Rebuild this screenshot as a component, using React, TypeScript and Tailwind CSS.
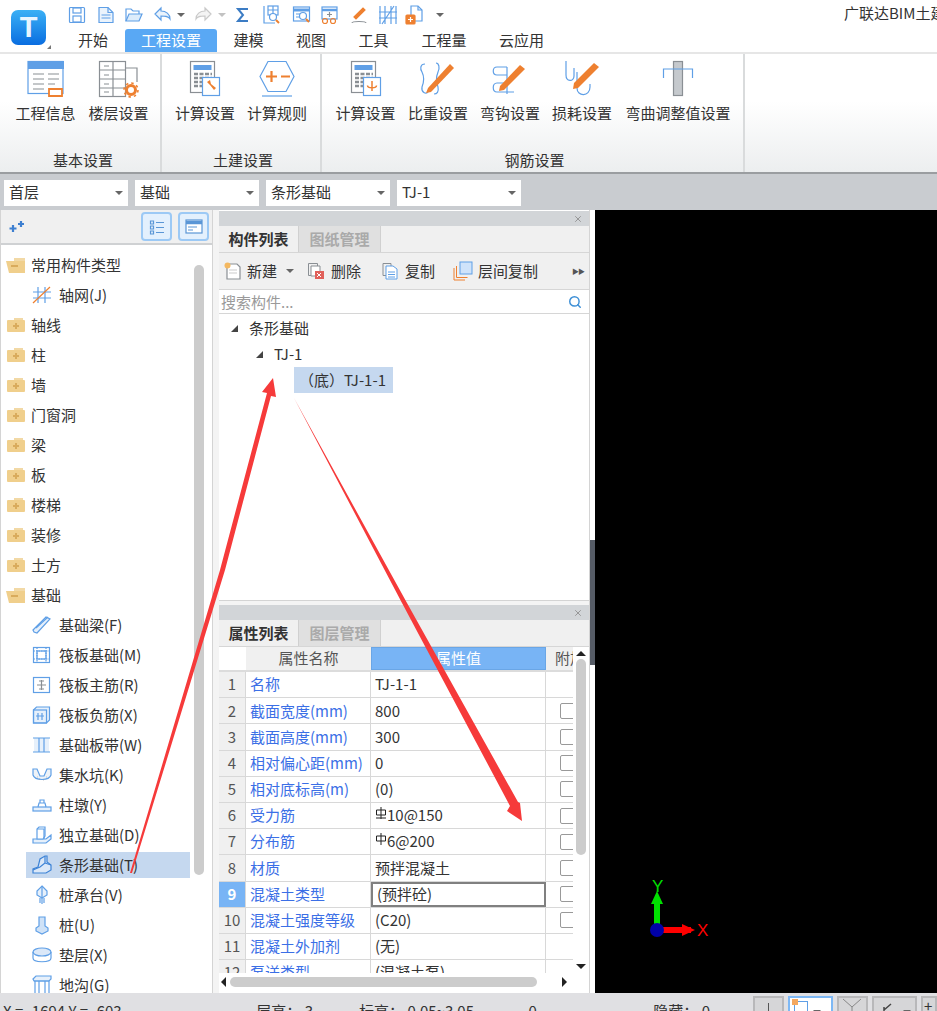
import { Search, X } from "lucide-react";
import type { ReactNode } from "react";

const blue = "#5f9fe6";
const orange = "#ee8030";
const grey = "#8a8f94";

function Ico({ s = 20, w, h, children }: { s?: number; w?: number; h?: number; children: ReactNode }) {
  return (
    <svg width={w ?? s} height={h ?? s} viewBox={`0 0 ${w ?? s} ${h ?? s}`} fill="none" stroke={blue} strokeWidth="1.2" className="shrink-0">
      {children}
    </svg>
  );
}

function Caret({ className = "" }: { className?: string }) {
  return <span className={`inline-block w-0 h-0 border-x-[4px] border-x-transparent border-t-[4px] border-t-[#666] ${className}`} />;
}

const quickIcons: { ml: string; icon: ReactNode }[] = [
  { ml: "", icon: <Ico s={18}><rect x="1.500" y="1.500" width="15" height="15" rx="1" /><rect x="5" y="2" width="8" height="5" /><rect x="5" y="10" width="8" height="6" /></Ico> },
  { ml: "ml-[11px]", icon: <Ico s={18}><path d="M2 1.500h9l5 5v10H2z" fill="#eaf3fc" /><path d="M11 1.500v5h5M4.500 9h9M4.500 12h9" /></Ico> },
  { ml: "ml-[9px]", icon: <Ico><path d="M2 16V4h5l2 2h6v3" /><path d="M2 16l3-7h13l-3 7z" fill="#dcecfb" /></Ico> },
  { ml: "ml-[9px]", icon: <Ico><path d="M8 3L2 9l6 6v-4c4 0 7 0 9 3 0-5-4-8-9-8z" fill="#eaf3fc" /></Ico> },
  { ml: "ml-[4px]", icon: <Caret /> },
  { ml: "ml-[8px]", icon: <Ico><path d="M12 3l6 6-6 6v-4c-4 0-7 0-9 3 0-5 4-8 9-8z" fill="#f4f4f4" stroke="#c9c9c9" /></Ico> },
  { ml: "ml-[5px]", icon: <Caret className="opacity-40" /> },
  { ml: "ml-[8px]", icon: <Ico s={18}><path d="M14 3H4l5 6-5 6h10" stroke="#3c7cc4" strokeWidth="2" /></Ico> },
  { ml: "ml-[10px]", icon: <Ico><path d="M2 1v17h11" /><rect x="6" y="1" width="10" height="9" /><path d="M6 5h10M11 1v9" /><circle cx="11" cy="12" r="3.500" fill="#fff" /><path d="M14 15l3 3" stroke={orange} strokeWidth="2" /></Ico> },
  { ml: "ml-[10px]", icon: <Ico><rect x="1.500" y="2" width="16" height="14" /><path d="M1.500 5h16" strokeWidth="3" /><path d="M4 9h4M4 12h4" /><circle cx="11" cy="11" r="3.500" fill="#fff" /><path d="M14 14l3 3" stroke={orange} strokeWidth="2" /></Ico> },
  { ml: "ml-[8px]", icon: <Ico><rect x="2" y="2" width="15" height="12" /><path d="M2 5h15" strokeWidth="2.500" /><path d="M9.500 7v5M7 9.500h5" stroke={grey} /><circle cx="5" cy="16" r="2.500" stroke={orange} /><circle cx="13" cy="16" r="2.500" stroke={orange} /></Ico> },
  { ml: "ml-[10px]", icon: <Ico><path d="M4 12L13 3l2 2-9 9z" fill={orange} stroke={orange} /><path d="M2 18c0-2 14-2 14 0" stroke={grey} /></Ico> },
  { ml: "ml-[8px]", icon: <Ico><path d="M2 1v18M7 1v18M13 1v18M18 1v18M1 7h18M1 13h18M4 19L16 1" /></Ico> },
  { ml: "ml-[7px]", icon: <Ico><path d="M6 1h7l4 4v11H6z" fill="#fff" /><path d="M13 1v4h4" /><rect x="1" y="10" width="9" height="9" rx="1" fill={orange} stroke={orange} /><path d="M5.500 12v5M3 14.500h5" stroke="#fff" /></Ico> },
  { ml: "ml-[11px]", icon: <Caret /> },
];

const ribbonIcons: Record<string, ReactNode> = {
  info: (
    <Ico w={40} h={40}>
      <rect x="2" y="1.500" width="35" height="32" fill="#fff" />
      <rect x="2" y="1" width="36" height="8" fill={blue} stroke="none" />
      <path d="M7 14h11M22 14h11M7 19h11M22 19h11M7 24h11M22 24h7M7 29h11" stroke={grey} />
      <path d="M23 29h13v7H23z" fill="#fff" stroke={orange} strokeWidth="1.800" />
    </Ico>
  ),
  floor: (
    <Ico w={42} h={40}>
      <rect x="1.500" y="1.500" width="26" height="35" stroke={grey} fill="#fff" />
      <path d="M15 1.500v35M1.500 10h26M1.500 19h26M1.500 28h26M27 8h12v14M6 6h5M6 15h5M6 24h5M6 32h5" stroke={grey} />
      <circle cx="33" cy="30" r="4.500" stroke={orange} strokeWidth="3" fill="#fff" />
      <circle cx="33" cy="30" r="7" stroke={orange} strokeWidth="1.500" strokeDasharray="2.500 3" />
    </Ico>
  ),
  calc: (
    <Ico w={32} h={38}>
      <rect x="1.500" y="1.500" width="24" height="31" stroke={grey} fill="#fff" />
      <rect x="4.500" y="5" width="18" height="5" fill={blue} stroke="none" />
      <path d="M5 14h18M5 18h18M5 22h8M5 26h8" stroke={grey} strokeWidth="2.500" strokeDasharray="4 1.500" />
      <rect x="13.500" y="17.500" width="17" height="18" fill="#fff" />
      <path d="M18 22l3 3 4 5 2-2-5-4-1-4z" fill={orange} stroke="none" />
    </Ico>
  ),
  rule: (
    <Ico w={38} h={38}>
      <path d="M10 1.500h18l8 15-8 15H10L2 16.500z" fill="#fff" />
      <path d="M8 16.500h11M13.500 11v11M23 16.500h9" stroke={orange} strokeWidth="2.200" />
      <path d="M4 36h30" />
    </Ico>
  ),
  calc2: (
    <Ico w={32} h={38}>
      <rect x="1.500" y="1.500" width="24" height="31" stroke={grey} fill="#fff" />
      <rect x="4.500" y="5" width="18" height="5" fill={blue} stroke="none" />
      <path d="M5 14h18M5 18h18M5 22h8M5 26h8" stroke={grey} strokeWidth="2.500" strokeDasharray="4 1.500" />
      <rect x="13.500" y="17.500" width="17" height="18" fill="#fff" />
      <path d="M22 21v10M17.500 25.500c0 3 9 3 9 0" stroke={orange} strokeWidth="1.500" />
    </Ico>
  ),
  density: (
    <Ico w={38} h={38}>
      <path d="M6 4c-5 0-5 5-3 8 2 4 2 10 0 15-1 5 4 8 6 5M17 3c3 0 4 5 2 9-2 5-2 10 0 15 1 5-1 7-4 7" />
      <path d="M9 28L31 4l4 4-23 24-5 1z" fill={orange} stroke="none" />
    </Ico>
  ),
  hook: (
    <Ico w={38} h={38}>
      <path d="M16 7H6c-5 0-5 8 0 8h10M16 7v27M16 23H6c-5 0-5 9 0 9h17" />
      <path d="M9 26L29 5l5 4-21 21-5 1z" fill={orange} stroke="none" />
    </Ico>
  ),
  loss: (
    <Ico w={38} h={38}>
      <path d="M3 1v14c0 7 8 7 8 1V8M14 12v16c0 9 13 9 13-1v-3" />
      <path d="M11 23L31 3l5 4-21 21-5 1z" fill={orange} stroke="none" />
    </Ico>
  ),
  bend: (
    <Ico w={32} h={38}>
      <rect x="11.500" y="1.500" width="9" height="34" fill="#c5c9cd" stroke={grey} />
      <path d="M1.500 18V9h29v9" />
    </Ico>
  ),
};

const ribbonGroups = [
  { title: "基本设置", pad: "w-[162px] pl-[9px]", items: [{ label: "工程信息", icon: "info", w: "w-[73px]" }, { label: "楼层设置", icon: "floor", w: "w-[73px]" }] },
  { title: "土建设置", pad: "w-[160px] pl-[7px]", items: [{ label: "计算设置", icon: "calc", w: "w-[72px]" }, { label: "计算规则", icon: "rule", w: "w-[72px]" }] },
  {
    title: "钢筋设置",
    pad: "w-[423px] pl-[7px]",
    items: [
      { label: "计算设置", icon: "calc2", w: "w-[73px]" },
      { label: "比重设置", icon: "density", w: "w-[72px]" },
      { label: "弯钩设置", icon: "hook", w: "w-[72px]" },
      { label: "损耗设置", icon: "loss", w: "w-[72px]" },
      { label: "弯曲调整值设置", icon: "bend", w: "w-[120px]" },
    ],
  },
];

function FolderClosed() {
  return (
    <svg width="20" height="20" viewBox="0 0 20 20" className="shrink-0">
      <path d="M8 3h9v2H8z" fill="#f2d9a6" />
      <rect x="1" y="5" width="18" height="12" rx="1" fill="#f0cf8c" />
      <path d="M10 8v6M7 11h6" stroke="#d9ab5c" strokeWidth="2" />
    </svg>
  );
}

function FolderOpen() {
  return (
    <svg width="20" height="20" viewBox="0 0 20 20" className="shrink-0">
      <path d="M8 3h11v4H8z" fill="#f2d9a6" />
      <path d="M0 6h19v12H3z" fill="#f0cf8c" />
      <path d="M5 11h7" stroke="#d9ab5c" strokeWidth="2" />
    </svg>
  );
}

const leafIcons: Record<string, ReactNode> = {
  grid: <Ico><path d="M6 2v16M13 2v16M1 7h18M1 13h18" /><path d="M1 18L18 2" stroke={orange} /></Ico>,
  beam: <Ico><path d="M1 15L14 2l4 2L5 18l-3-1z" fill="#e6f0fb" /><path d="M4 13l12-11" /></Ico>,
  raft: <Ico><rect x="1.500" y="2.500" width="16" height="15" /><rect x="5" y="6" width="9" height="8" /><path d="M1.500 6h16M1.500 14h16M5 2.500v15M14 2.500v15" strokeDasharray="1.500 1" /></Ico>,
  main: <Ico><rect x="1.500" y="2.500" width="16" height="15" /><path d="M9.500 5v10M5 10h9M7 6h5M7 14h5" stroke={grey} /></Ico>,
  neg: <Ico><path d="M1.500 5l3-3h13v13l-3 3h-13z" fill="#e6f0fb" /><rect x="1.500" y="5" width="13" height="13" /><path d="M6 8v7M10 8v7M4 11h8" /></Ico>,
  strip: <Ico><rect x="2" y="3" width="15" height="14" fill="#e6f0fb" stroke="none" /><path d="M1 3h17M1 17h17M7 3v14M12 3v14" /></Ico>,
  pit: <Ico><path d="M1 4h4l3 7h4l3-7h4v6c-2 6-16 6-18 0z" fill="#eef3f8" /><path d="M7 14h.5M11 15h.5M14 12h.5M5 12h.5" stroke={grey} /></Ico>,
  pier: <Ico><rect x="1" y="12" width="18" height="4" fill="#e6f0fb" /><path d="M6 12l1-4h6l1 4M8 8V5h4v3" /></Ico>,
  single: <Ico><path d="M1 14h13l5-4v4l-5 4H1z" fill="#e6f0fb" /><path d="M5 14V4l2-2h6v9l-2 3z" fill="#fff" /><path d="M5 4h7v10" /></Ico>,
  stripBase: <Ico><path d="M1 18v-4l5-2 2-8 5-3 2 0v6l4 3v5l-5 3z" fill="#dbe8f8" stroke="#3d83d6" /><path d="M13 1v7l-5 4-7 3M13 8l6 2" stroke="#3d83d6" /></Ico>,
  cap: <Ico><path d="M10 1l5 5v4l-5 3-5-3V6z" fill="#e6f0fb" /><path d="M10 1v12M8 13v5M12 13v5M10 13v6" /></Ico>,
  pile: <Ico><path d="M7 2h6v9l3 2v3l-6 3-6-3v-3l3-2z" fill="#cfe2f7" /></Ico>,
  pad: <Ico><ellipse cx="10" cy="7" rx="9" ry="4" fill="#dbe8f8" /><path d="M1 7v6c0 5 18 5 18 0V7" /></Ico>,
  ditch: <Ico><path d="M1 4L4 1h15v3L17 6H2z" fill="#e6f0fb" /><path d="M2 6h15M3 6v13M7 6v13M13 6v13M17 6v13" /></Ico>,
};

const tree: { label: string; icon?: string; open?: boolean; leaf?: boolean; selected?: boolean }[] = [
  { label: "常用构件类型", open: true },
  { label: "轴网(J)", leaf: true, icon: "grid" },
  { label: "轴线" },
  { label: "柱" },
  { label: "墙" },
  { label: "门窗洞" },
  { label: "梁" },
  { label: "板" },
  { label: "楼梯" },
  { label: "装修" },
  { label: "土方" },
  { label: "基础", open: true },
  { label: "基础梁(F)", leaf: true, icon: "beam" },
  { label: "筏板基础(M)", leaf: true, icon: "raft" },
  { label: "筏板主筋(R)", leaf: true, icon: "main" },
  { label: "筏板负筋(X)", leaf: true, icon: "neg" },
  { label: "基础板带(W)", leaf: true, icon: "strip" },
  { label: "集水坑(K)", leaf: true, icon: "pit" },
  { label: "柱墩(Y)", leaf: true, icon: "pier" },
  { label: "独立基础(D)", leaf: true, icon: "single" },
  { label: "条形基础(T)", leaf: true, icon: "stripBase", selected: true },
  { label: "桩承台(V)", leaf: true, icon: "cap" },
  { label: "桩(U)", leaf: true, icon: "pile" },
  { label: "垫层(X)", leaf: true, icon: "pad" },
  { label: "地沟(G)", leaf: true, icon: "ditch" },
];

function RebarMark({ bars }: { bars?: boolean }) {
  return (
    <svg width="12" height="12" viewBox="0 0 12 12" fill="none" stroke="#222" strokeWidth="1" className="mb-[5px] shrink-0">
      {bars && <path d="M1 11h10" />}
      <path d="M1.500 3h9v5h-9zM6 0v12" />
    </svg>
  );
}

const rows: { n: number; name: string; value: ReactNode; check: boolean }[] = [
  { n: 1, name: "名称", value: "TJ-1-1", check: false },
  { n: 2, name: "截面宽度(mm)", value: "800", check: true },
  { n: 3, name: "截面高度(mm)", value: "300", check: true },
  { n: 4, name: "相对偏心距(mm)", value: "0", check: true },
  { n: 5, name: "相对底标高(m)", value: "(0)", check: true },
  { n: 6, name: "受力筋", value: <span className="flex items-center"><RebarMark bars />10@150</span>, check: true },
  { n: 7, name: "分布筋", value: <span className="flex items-center"><RebarMark />6@200</span>, check: true },
  { n: 8, name: "材质", value: "预拌混凝土", check: true },
  { n: 9, name: "混凝土类型", value: "(预拌砼)", check: true },
  { n: 10, name: "混凝土强度等级", value: "(C20)", check: true },
  { n: 11, name: "混凝土外加剂", value: "(无)", check: false },
  { n: 12, name: "泵送类型", value: "(混凝土泵)", check: false },
];

function PanelHead({ active, other }: { active: string; other: string }) {
  return (
    <>
      <div className="h-[15px] bg-[#d2d5d8] flex items-center justify-end pr-[6px]">
        <X size={10} strokeWidth={2} className="text-[#8a8a8a]" />
      </div>
      <div className="h-[27px] bg-[#f0f0f0] flex border-b border-[#d6d6d6]">
        <div className="w-[80px] flex items-center justify-center font-bold text-[#333] border-r border-[#d0d0d0]">{active}</div>
        <div className="w-[82px] flex items-center justify-center font-bold text-[#aaa] bg-[#e0e0e0] border-r border-[#d0d0d0]">{other}</div>
      </div>
    </>
  );
}

export default function App() {
  return (
    <div className="relative w-[937px] h-[1011px] overflow-hidden bg-white text-[#333] text-[15px] font-['Noto_Sans_CJK_SC','Noto_Sans',sans-serif]">
      {/* title + tabs */}
      <div className="h-[52px] flex bg-white">
        <div className="w-[57px] shrink-0 pl-[11px] pt-[10px] relative">
          <div className="w-[35px] h-[35px] rounded-[7px] bg-gradient-to-b from-[#3bb0f5] to-[#0a6de0] flex items-center justify-center text-[#e8f5ff] text-[29px] font-bold leading-none font-['Liberation_Sans',sans-serif]">T</div>
          <span className="absolute left-[47px] top-[45px] w-0 h-0 border-l-[4px] border-l-transparent border-b-[4px] border-b-[#777]" />
        </div>
        <div className="flex-1 min-w-0 flex flex-col">
          <div className="h-[29px] flex items-center pl-[11px] relative">
            {quickIcons.map((q, i) => (
              <div key={i} className={`${q.ml} flex items-center shrink-0`}>{q.icon}</div>
            ))}
            <div className="absolute left-[787px] top-[2px] whitespace-nowrap">广联达BIM土建计量平台</div>
          </div>
          <div className="h-[23px] flex text-center leading-[22px]">
            <div className="w-[68px] pl-[4px]">开始</div>
            <div className="w-[92px] bg-[#59a8f4] text-white rounded-t-[3px]">工程设置</div>
            <div className="w-[63px]">建模</div>
            <div className="w-[62px]">视图</div>
            <div className="w-[63px]">工具</div>
            <div className="w-[78px]">工程量</div>
            <div className="w-[77px]">云应用</div>
          </div>
        </div>
      </div>

      {/* ribbon */}
      <div className="h-[122px] flex border-t-2 border-[#e6e6e6] bg-gradient-to-b from-white from-40% to-[#eceeef] border-b-2 border-b-[#9a9da0]">
        {ribbonGroups.map((g) => (
          <div key={g.title} className={`${g.pad} flex flex-col border-r-2 border-[#d9dbdc]`}>
            <div className="flex">
              {g.items.map((it) => (
                <div key={it.label + it.icon} className={`${it.w} flex flex-col items-center`}>
                  <div className="h-[49px] pt-[6px] flex items-start justify-center">{ribbonIcons[it.icon]}</div>
                  <div className="leading-5 whitespace-nowrap">{it.label}</div>
                </div>
              ))}
            </div>
            <div className="mt-[27px] text-center leading-5 pr-[3px]">{g.title}</div>
          </div>
        ))}
      </div>

      {/* selectors */}
      <div className="h-[36px] bg-[#c9ccd0] flex items-center gap-[7px] pl-[4px] pt-[1px]">
        {["首层", "基础", "条形基础", "TJ-1"].map((v) => (
          <div key={v} className="w-[124px] h-[26px] bg-white flex items-center justify-between px-[5px]">
            <span>{v}</span>
            <Caret />
          </div>
        ))}
      </div>

      {/* main */}
      <div className="h-[783px] flex bg-[#f4f4f4]">
        {/* left tree */}
        <div className="w-[213px] shrink-0 flex flex-col bg-white border-x border-[#d4d4d4]">
          <div className="h-[35px] shrink-0 bg-[#f0f0f0] border-b-2 border-[#cfd1d3] flex items-center pl-[7px] pr-[3px]">
            <svg width="18" height="14" viewBox="0 0 18 14" className="shrink-0">
              <path d="M5 5v7M1.500 8.500h7M13 1v6M10 4h6" stroke="#3d7fd0" strokeWidth="2.200" />
            </svg>
            <div className="ml-auto flex gap-[6px]">
              <div className="w-[31px] h-[29px] rounded-[4px] border-2 border-[#9cc9f5] bg-[#e3f0fd] flex items-center justify-center">
                <Ico s={16}><path d="M1.500 2h3v3h-3zM1.500 7h3v3h-3zM1.500 12h3v3h-3zM7 3.500h8M7 8.500h8M7 13.500h8" stroke="#5a96d6" /></Ico>
              </div>
              <div className="w-[31px] h-[29px] rounded-[4px] border-2 border-[#9cc9f5] bg-[#e3f0fd] flex items-center justify-center">
                <Ico s={18}><rect x="1" y="2" width="16" height="13" fill="#fff" stroke="#5a96d6" /><path d="M1 4.500h16" stroke="#5a96d6" strokeWidth="3.500" /><path d="M3 9h9M3 12h5" stroke="#5a96d6" /></Ico>
              </div>
            </div>
          </div>
          <div className="flex flex-1 min-h-0 overflow-hidden">
            <div className="w-[193px] shrink-0 pt-[5px]">
              {tree.map((t) =>
                t.leaf ? (
                  <div key={t.label} className="h-[30px] flex items-center pl-[25px]">
                    <div className={`w-[164px] h-[26px] flex items-center pl-[6px] gap-[7px] whitespace-nowrap ${t.selected ? "bg-[#c5d8ef]" : ""}`}>
                      {leafIcons[t.icon as string]}
                      <span>{t.label}</span>
                    </div>
                  </div>
                ) : (
                  <div key={t.label} className="h-[30px] flex items-center pl-[5px] gap-[5px]">
                    {t.open ? <FolderOpen /> : <FolderClosed />}
                    <span>{t.label}</span>
                  </div>
                )
              )}
            </div>
            <div className="pt-[20px]">
              <div className="w-[10px] h-[610px] rounded-full bg-[#cccccc]" />
            </div>
          </div>
        </div>

        {/* centre panels */}
        <div className="w-[371px] shrink-0 ml-[6px] flex flex-col bg-white border-r border-[#d4d4d4]">
          <div className="h-[390px] shrink-0 flex flex-col pt-[1px]">
            <PanelHead active="构件列表" other="图纸管理" />
            <div className="h-[37px] bg-[#f0f0f0] flex items-center pl-[5px] border-b border-[#d6d6d6] whitespace-nowrap">
              <Ico s={18}><path d="M3 2h10l3 3v12H3z" fill="#fff" stroke={grey} /><path d="M5 8h8M5 11h8" stroke="#ccc" /><circle cx="3.500" cy="3.500" r="3" fill="#f4b860" stroke="none" /></Ico>
              <span className="ml-[5px]">新建</span>
              <Caret className="ml-[9px]" />
              <svg width="18" height="18" viewBox="0 0 18 18" fill="none" className="ml-[13px] shrink-0">
                <path d="M1.500 1.500h9v12h-9z" stroke={grey} /><path d="M4 4h9v10H4z" fill="#fff" stroke={grey} />
                <rect x="8" y="9" width="9" height="8" fill="#e0605a" /><path d="M10 11l4 4M14 11l-4 4" stroke="#fff" />
              </svg>
              <span className="ml-[6px]">删除</span>
              <svg width="17" height="18" viewBox="0 0 17 18" fill="none" className="ml-[21px] shrink-0">
                <path d="M1 1.500h8v12H1z" stroke={grey} /><path d="M4 4h7l4 3v10H4z" fill="#fff" stroke={blue} /><path d="M6 10h7M6 12.500h7M6 15h7" stroke={blue} />
              </svg>
              <span className="ml-[6px]">复制</span>
              <svg width="20" height="20" viewBox="0 0 20 20" fill="none" className="ml-[18px] shrink-0">
                <path d="M1 7v12h11M3.500 5v11.500h11" stroke={orange} /><rect x="7" y="1" width="12" height="12" fill="#cfe3fa" stroke={blue} />
              </svg>
              <span className="ml-[5px]">层间复制</span>
              <span className="ml-auto mr-[5px] text-[7px] tracking-[-1px] text-[#555]">▶▶</span>
            </div>
            <div className="h-[24px] flex items-center justify-between pl-[2px] pr-[7px] pt-[1px] border-b border-[#d6d6d6] text-[#9a9a9a]">
              <span>搜索构件...</span>
              <Search size={14} strokeWidth={2.500} className="text-[#3d8fd6]" />
            </div>
            <div className="flex-1 pt-[1px]">
              <div className="h-[26px] flex items-center pl-[12px]">
                <span className="w-0 h-0 border-l-[7px] border-l-transparent border-b-[7px] border-b-[#444]" />
                <span className="ml-[11px]">条形基础</span>
              </div>
              <div className="h-[26px] flex items-center pl-[37px]">
                <span className="w-0 h-0 border-l-[7px] border-l-transparent border-b-[7px] border-b-[#444]" />
                <span className="ml-[11px]">TJ-1</span>
              </div>
              <div className="h-[26px] ml-[75px] w-[99px] bg-[#c5d8ef] flex items-center pl-[5px] whitespace-nowrap">（底）TJ-1-1</div>
            </div>
          </div>
          <div className="h-[5px] shrink-0 bg-[#f4f4f4] border-t border-[#d4d4d4]" />
          <div className="flex-1 min-h-0 flex flex-col">
            <PanelHead active="属性列表" other="图层管理" />
            <div className="h-[326px] flex">
              <div className="w-[354px] shrink-0 overflow-hidden">
                <div className="h-[25px] flex border-b-2 border-[#dcdcdc]">
                  <div className="w-[27px] shrink-0 bg-white" />
                  <div className="w-[125px] shrink-0 bg-[#f0f0f0] flex items-center justify-center text-[#555]">属性名称</div>
                  <div className="w-[175px] shrink-0 bg-[#78b4f5] flex items-center justify-center text-white border border-[#6aa6e6]">属性值</div>
                  <div className="w-[27px] bg-[#f0f0f0] pl-[9px] flex items-center overflow-hidden text-[#555] whitespace-nowrap">附加</div>
                </div>
                {rows.map((r) => (
                  <div key={r.n} className="h-[26.2px] flex border-b border-[#d8d8d8]">
                    <div className={`w-[27px] shrink-0 flex items-center justify-center border-r border-[#d8d8d8] ${r.n === 9 ? "bg-[#78b4f5] text-white font-bold" : "bg-[#f0f0f0] text-[#555]"}`}>{r.n}</div>
                    <div className="w-[125px] shrink-0 flex items-center pl-[4px] text-[#3b6fe6] border-r border-[#d8d8d8] whitespace-nowrap">{r.name}</div>
                    <div className={`w-[175px] shrink-0 flex items-center pl-[4px] whitespace-nowrap ${r.n === 9 ? "border-2 border-[#808080] pl-[3px]" : "border-r border-[#d8d8d8]"}`}>{r.value}</div>
                    <div className="w-[27px] pl-[14px] flex items-center overflow-hidden">
                      {r.check && <div className="w-[16px] h-[16px] shrink-0 rounded-[2px] border border-[#999] bg-white" />}
                    </div>
                  </div>
                ))}
              </div>
              <div className="flex-1 flex flex-col items-center pt-[4px] bg-white">
                <span className="w-0 h-0 border-x-[5px] border-x-transparent border-b-[5px] border-b-[#222]" />
                <div className="w-[10px] h-[196px] mt-[3px] rounded-full bg-[#cccccc]" />
                <span className="w-0 h-0 mt-[109px] border-x-[5px] border-x-transparent border-t-[5px] border-t-[#222]" />
              </div>
            </div>
            <div className="h-[18px] flex items-center pl-[2px] bg-white">
              <span className="w-0 h-0 border-y-[5px] border-y-transparent border-r-[5px] border-r-[#222]" />
              <div className="w-[307px] h-[10px] ml-[4px] rounded-full bg-[#cccccc]" />
              <span className="w-0 h-0 ml-[25px] border-y-[5px] border-y-transparent border-l-[5px] border-l-[#222]" />
            </div>
          </div>
        </div>

        {/* splitter */}
        <div className="w-[5px] shrink-0 bg-white pt-[330px]">
          <div className="h-[125px] bg-[#565c66]" />
        </div>

        {/* viewport */}
        <div className="relative flex-1 bg-black">
          <svg width="90" height="70" viewBox="0 0 90 70" className="absolute left-[50px] top-[665px]">
            <path d="M12 55V26" stroke="#00e000" strokeWidth="6" />
            <path d="M12 16l6 13H6z" fill="#00e000" />
            <path d="M12 55h34" stroke="#ff0000" strokeWidth="6" />
            <path d="M50 55l-13 6V49z" fill="#ff0000" />
            <circle cx="12" cy="55" r="7" fill="#0000a8" />
            <text x="7" y="17" fill="#00e000" fontSize="17" fontFamily="Liberation Sans, sans-serif">Y</text>
            <text x="52" y="61" fill="#ff0000" fontSize="17" fontFamily="Liberation Sans, sans-serif">X</text>
          </svg>
        </div>
      </div>

      {/* status bar */}
      <div className="h-[18px] bg-[#e0e0e3] flex whitespace-nowrap pt-[8px] leading-5">
        <span className="w-[257px] pl-[3px]">X = -1694 Y = -603</span>
        <span className="w-[103px]">层高： 3</span>
        <span className="w-[170px]">标高： 0.05~3.05</span>
        <span className="w-[125px]">0</span>
        <span className="w-[100px]">隐藏： 0</span>
        <div className="flex gap-[4px] -mt-[5px] items-start">
          <div className="w-[31px] h-[20px] bg-[#d6d6d8] border-2 border-[#b8b8ba] flex justify-center pt-[5px]"><span className="w-[1px] h-[8px] bg-[#555]" /></div>
          <div className="w-[45px] h-[20px] bg-white border-2 border-[#7db8f5] flex pl-[4px] items-start">
            <span className="w-[14px] h-[14px] mt-[3px] border border-[#5f9fe6] relative"><span className="absolute -left-[3px] -top-[3px] w-[6px] h-[6px] bg-[#f4a860]" /></span>
            <Caret className="ml-[5px] mt-[12px]" />
          </div>
          <div className="w-[31px] h-[20px] bg-[#d6d6d8] border-2 border-[#b8b8ba]">
            <svg width="27" height="16" viewBox="0 0 27 16" fill="none" stroke="#888" strokeWidth="1"><path d="M4 1l9 8 9-8M13 9v7" /></svg>
          </div>
          <div className="w-[45px] h-[20px] bg-[#d6d6d8] border-2 border-[#b8b8ba] flex items-start">
            <svg width="24" height="16" viewBox="0 0 24 16" fill="none" stroke="#444" strokeWidth="1.500"><path d="M10 12l7-6M10 9v6" /></svg>
            <Caret className="ml-[5px] mt-[12px]" />
          </div>
          <div className="w-[16px] h-[20px] bg-[#d6d6d8] border-2 border-[#b8b8ba] leading-4 pl-[1px] overflow-hidden">+</div>
        </div>
      </div>

      {/* hand drawn annotation arrows */}
      <svg width="937" height="1011" className="absolute left-0 top-0 pointer-events-none">
        <polygon points="130,873 220,570 267,393 262,392 273,378 276,397 271,396 225,570 132,873" fill="#f63a3a" />
        <polygon points="294,398 407,603 518,802 520,803 522,821 507,811 510,806 402,603" fill="#f63a3a" />
      </svg>
    </div>
  );
}
